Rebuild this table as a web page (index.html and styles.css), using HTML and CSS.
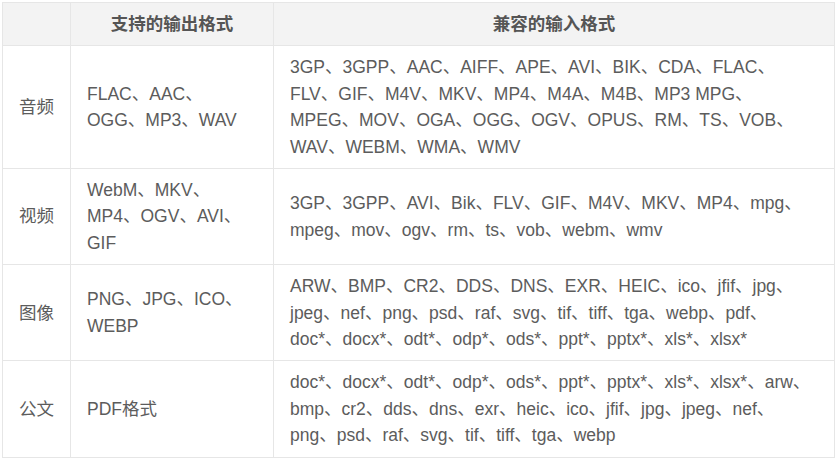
FILE: index.html
```html
<!DOCTYPE html>
<html lang="zh-CN">
<head>
<meta charset="utf-8">
<title>格式支持</title>
<link rel="stylesheet" href="styles.css">
</head>
<body>
<div class="page">
<table class="formats">
  <colgroup>
    <col class="c-type">
    <col class="c-out">
    <col class="c-in">
  </colgroup>
  <thead>
    <tr>
      <th></th>
      <th>支持的输出格式</th>
      <th>兼容的输入格式</th>
    </tr>
  </thead>
  <tbody>
    <tr>
      <td class="type">音频</td>
      <td>FLAC、AAC、<br>OGG、MP3、WAV</td>
      <td>3GP、3GPP、AAC、AIFF、APE、AVI、BIK、CDA、FLAC、<br>FLV、GIF、M4V、MKV、MP4、M4A、M4B、MP3 MPG、<br>MPEG、MOV、OGA、OGG、OGV、OPUS、RM、TS、VOB、<br>WAV、WEBM、WMA、WMV</td>
    </tr>
    <tr>
      <td class="type">视频</td>
      <td>WebM、MKV、<br>MP4、OGV、AVI、<br>GIF</td>
      <td>3GP、3GPP、AVI、Bik、FLV、GIF、M4V、MKV、MP4、mpg、<br>mpeg、mov、ogv、rm、ts、vob、webm、wmv</td>
    </tr>
    <tr>
      <td class="type">图像</td>
      <td>PNG、JPG、ICO、<br>WEBP</td>
      <td>ARW、BMP、CR2、DDS、DNS、EXR、HEIC、ico、jfif、jpg、<br>jpeg、nef、png、psd、raf、svg、tif、tiff、tga、webp、pdf、<br>doc*、docx*、odt*、odp*、ods*、ppt*、pptx*、xls*、xlsx*</td>
    </tr>
    <tr>
      <td class="type">公文</td>
      <td>PDF格式</td>
      <td>doc*、docx*、odt*、odp*、ods*、ppt*、pptx*、xls*、xlsx*、arw、<br>bmp、cr2、dds、dns、exr、heic、ico、jfif、jpg、jpeg、nef、<br>png、psd、raf、svg、tif、tiff、tga、webp</td>
    </tr>
  </tbody>
</table>
</div>
</body>
</html>
```
FILE: styles.css
```css
html, body {
  margin: 0;
  padding: 0;
  background: #ffffff;
}

.page {
  padding: 2px;
}

.formats {
  width: 832px;
  table-layout: fixed;
  border-collapse: collapse;
  font-family: "Liberation Sans", "Noto Sans CJK SC", sans-serif;
  font-size: 17.5px;
  line-height: 26.4px;
  color: #5c5c5c;
}

.c-type { width: 68px; }
.c-out { width: 203px; }
.c-in { width: 561px; }

.formats th,
.formats td {
  border: 1px solid #e6e6e6;
  padding: 8px 16px;
  vertical-align: middle;
  white-space: nowrap;
}

.formats th {
  background: #f3f3f3;
  font-weight: bold;
  text-align: center;
  color: #555555;
}

.formats td {
  text-align: left;
}

.formats td.type {
  text-align: center;
  padding-left: 8px;
  padding-right: 8px;
}
```
